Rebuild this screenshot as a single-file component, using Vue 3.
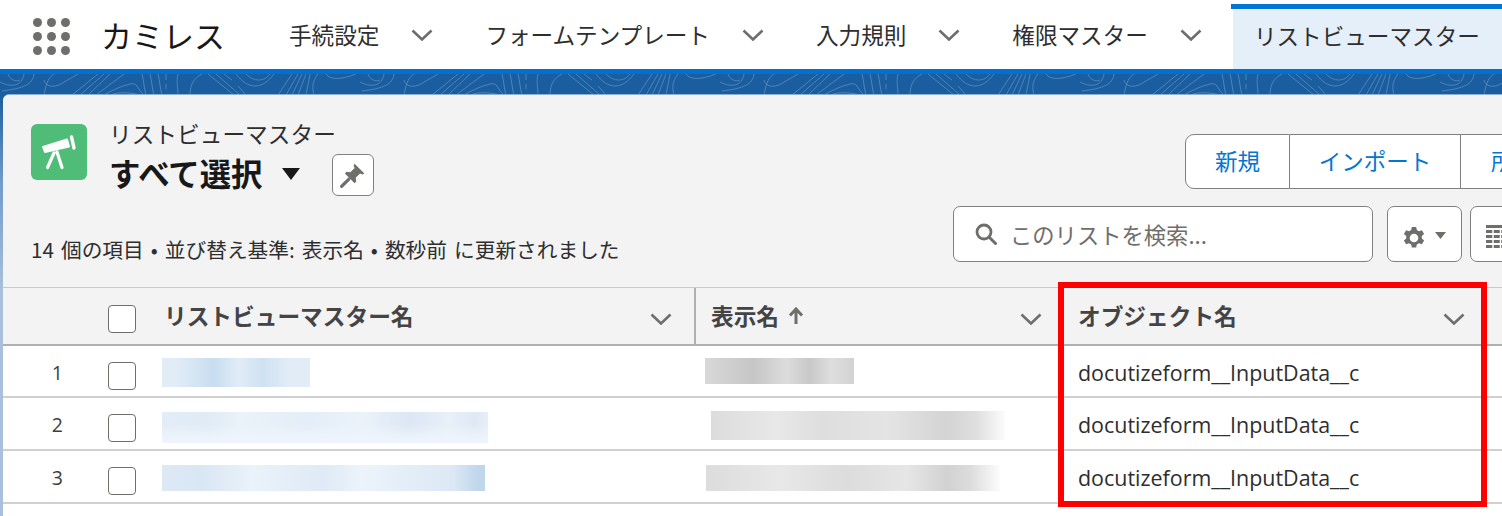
<script setup>
const tabs = [
  { label: '手続設定' },
  { label: 'フォームテンプレート' },
  { label: '入力規則' },
  { label: '権限マスター' },
]
const dots = [0, 1, 2, 3, 4, 5, 6, 7, 8]
const rows = [
  { n: 1, name: 'blur-name-1', disp: 'blur-disp-1' },
  { n: 2, name: 'blur-name-2', disp: 'blur-disp-2' },
  { n: 3, name: 'blur-name-3', disp: 'blur-disp-3' },
]
</script>

<template>
  <div class="page">
    <header class="nav">
      <div class="waffle"><i v-for="d in dots" :key="d"></i></div>
      <div class="app-name">カミレス</div>
      <nav class="tabs">
        <div v-for="t in tabs" :key="t.label" class="tab">
          <span>{{ t.label }}</span>
          <svg class="chev" viewBox="0 0 22 12"><path d="M1.5 1.5 11 10.5 20.5 1.5" /></svg>
        </div>
        <div class="tab-active">リストビューマスター</div>
      </nav>
    </header>

    <div class="band">
      <svg class="topo" width="1502" height="21" viewBox="0 0 1502 21">
        <defs>
          <pattern id="topo" x="0" y="0" width="360" height="21" patternUnits="userSpaceOnUse">
            <path d="M0 8C12 14 22 12 24 0M8 0C10 6 16 8 20 6M34 0C33 8 28 14 2 17M44 21C46 8 50 2 54 0M44 6C46 14 56 14 64 8L78 0M72 21 98 0M80 21 104 0M88 21 110 0M96 21 124 0M104 21C112 16 122 12 130 10S136 14 144 21M110 21C118 18 128 18 140 21M142 0C144 8 144 14 146 21M150 0C152 8 152 14 154 21M158 0C160 8 160 14 162 21M166 0V6M166 10V15M178 0C176 8 178 14 178 21M190 21C190 10 194 4 202 0M208 0 234 21M216 0 240 21M224 0 232 6M238 12 246 21M236 0C248 16 262 16 274 0M246 0C254 8 264 8 270 0M278 21 292 0M286 21 298 0M292 21 302 0M298 21 306 0M306 21 310 0M318 0C312 8 312 14 314 21M326 0C330 6 340 6 356 0" fill="none" stroke="#5b8fc0" stroke-width="1" opacity=".75" />
          </pattern>
        </defs>
        <rect width="1502" height="21" fill="url(#topo)" />
      </svg>
    </div>

    <main class="card">
      <section class="head">
        <div class="head-left">
          <div class="title-row">
            <div class="obj-icon">
              <svg viewBox="0 0 56 56" width="56" height="56">
                <path d="M12 23 36 15.500 38 22.500 14 28Z" fill="#fff" stroke="#fff" stroke-width="2" stroke-linejoin="round" />
                <path d="M40.500 13 43 24" stroke="#fff" stroke-width="3.400" stroke-linecap="round" fill="none" />
                <path d="M23 29 16.500 43.500M26 28 31 43.500" stroke="#fff" stroke-width="3.200" stroke-linecap="round" fill="none" />
              </svg>
            </div>
            <div class="titles">
              <div class="eyebrow">リストビューマスター</div>
              <div class="title-line">
                <span class="title">すべて選択</span>
                <svg class="title-caret" viewBox="0 0 18 12"><path d="M0 0H18L9 12Z" /></svg>
                <button class="pin">
                  <svg viewBox="0 0 24 24" width="26" height="26">
                    <path d="M13.500 1.500 22.500 10.500 20.500 11.500 18.500 10.500 14.500 14.500 15 18 13.500 19.500 4.500 10.500 6 9 9.500 9.500 13.500 5.500 12.500 3.500Z" fill="#706e6b" />
                    <path d="M8 16 1.500 22.500" stroke="#706e6b" stroke-width="3" stroke-linecap="round" />
                  </svg>
                </button>
              </div>
            </div>
          </div>
          <div class="meta">14 個の項目 • 並び替え基準: 表示名 • 数秒前 に更新されました</div>
        </div>
        <div class="head-right">
          <div class="btn-group">
            <button class="btn btn-new">新規</button>
            <button class="btn btn-import">インポート</button>
            <button class="btn btn-more">所有者の変更</button>
          </div>
          <div class="tools">
            <div class="search">
              <svg viewBox="0 0 22 22" width="22" height="22">
                <circle cx="9" cy="9" r="7" fill="none" stroke="#706e6b" stroke-width="2.800" />
                <path d="M14 14 20.500 20.500" stroke="#706e6b" stroke-width="3" stroke-linecap="round" />
              </svg>
              <span>このリストを検索...</span>
            </div>
            <button class="tool gear">
              <svg class="gear-ico" viewBox="0 0 22 22" width="22" height="22">
                <path fill="#706e6b" fill-rule="evenodd" d="M8.800 0h4.400l.6 3 2.200 1.300 2.900-1 2.200 3.800-2.300 2v2.400l2.300 2-2.200 3.800-2.900-1-2.200 1.300-.6 3H8.800l-.6-3L6 16.300l-2.900 1L.9 13.500l2.300-2V9.100l-2.300-2L3.100 3.300l2.900 1L8.200 3ZM11 6.700a3.800 3.800 0 1 0 0 8.600 3.800 3.800 0 0 0 0-8.600Z" />
              </svg>
              <svg class="mini-caret" viewBox="0 0 11 7" width="11" height="7"><path d="M0 0H11L5.500 7Z" fill="#706e6b" /></svg>
            </button>
            <button class="tool table-btn">
              <svg class="table-ico" viewBox="0 0 22 24" width="22" height="24">
                <path d="M0 0H22V3H0Z" fill="#706e6b" />
                <path d="M0 5H22V8H0ZM0 10H22V13H0ZM0 15H22V18H0ZM0 20H22V23H0Z" fill="#706e6b" />
                <path d="M7 5V23M14.500 5V23" stroke="#fff" stroke-width="1.500" />
              </svg>
            </button>
          </div>
        </div>
      </section>

      <section class="table">
        <div class="thead grid">
          <div></div>
          <div class="check-cell"><span class="check"></span></div>
          <div class="th th-name">
            <span>リストビューマスター名</span>
            <svg class="chev" viewBox="0 0 22 12"><path d="M1.500 1.500 11 10.500 20.500 1.500" /></svg>
          </div>
          <div class="th th-disp">
            <span>表示名</span>
            <svg class="arrow" viewBox="0 0 16 18" width="16" height="18"><path d="M8 17V3M2 8.500 8 2l6 6.500" /></svg>
            <svg class="chev push" viewBox="0 0 22 12"><path d="M1.500 1.500 11 10.500 20.500 1.500" /></svg>
          </div>
          <div class="th th-obj">
            <span>オブジェクト名</span>
            <svg class="chev" viewBox="0 0 22 12"><path d="M1.500 1.500 11 10.500 20.500 1.500" /></svg>
          </div>
        </div>
        <div v-for="r in rows" :key="r.n" class="row grid" :class="'row-' + r.n">
          <div class="num">{{ r.n }}</div>
          <div class="check-cell"><span class="check"></span></div>
          <div class="cell"><div class="blur" :class="r.name"></div></div>
          <div class="cell"><div class="blur" :class="r.disp"></div></div>
          <div class="cell obj">docutizeform__InputData__c</div>
        </div>
      </section>
      <div class="highlight"></div>
    </main>
  </div>
</template>

<style>
html, body { margin: 0; background: #fff; overflow: hidden; }
</style>

<style scoped>
.page {
  width: 1502px;
  height: 516px;
  overflow: hidden;
  font-family: "Noto Sans CJK JP", "Noto Sans", sans-serif;
  color: #2b2826;
  background: linear-gradient(180deg, #1b5e9f 0, #1b5e9f 95px, #6f9aca 180px, #a9c0dc 290px);
  display: flex;
  flex-direction: column;
}
.nav {
  height: 69px;
  flex: none;
  background: #fff;
  display: flex;
  align-items: stretch;
  padding-left: 33px;
}
.waffle {
  width: 37px;
  height: 37px;
  margin-top: 18px;
  display: grid;
  grid-template-columns: repeat(3, 9px);
  grid-auto-rows: 9px;
  gap: 5px;
}
.waffle i { background: #706e6b; border-radius: 50%; }
.app-name {
  margin-left: 31px;
  width: 188px;
  font-size: 31px;
  line-height: 69px;
  color: #181818;
  white-space: nowrap;
}
.tabs { display: flex; align-items: stretch; flex: 1; min-width: 0; }
.tab {
  display: flex;
  align-items: center;
  gap: 32px;
  margin-right: 52px;
  font-size: 22.600px;
  white-space: nowrap;
  color: #2e2e2e;
}
.tab:nth-of-type(4) { margin-right: 29px; }
.chev { width: 22px; height: 12px; flex: none; }
.chev path { fill: none; stroke: #706e6b; stroke-width: 2.600; }
.tab-active {
  flex: 1;
  margin-top: 4px;
  border-top: 5px solid #0176d3;
  background: linear-gradient(#e5eff9, #e5eff9) 2px 0 no-repeat;
  font-size: 22.600px;
  line-height: 54px;
  padding-left: 23px;
  white-space: nowrap;
  color: #2e2e2e;
}
.band {
  height: 26px;
  flex: none;
  border-top: 5px solid #0070d2;
  box-sizing: border-box;
  background: #1b5e9f;
  overflow: hidden;
}
.topo { display: block; }
.card {
  position: relative;
  flex: 1;
  margin-left: 3px;
  background: #fff;
  border-top-left-radius: 6px;
  box-shadow: 0 -1px 0 #8eb0d2;
  display: flex;
  flex-direction: column;
}
.head {
  height: 193px;
  flex: none;
  background: #f3f3f3;
  box-sizing: border-box;
  border-top-left-radius: 6px;
  border-bottom: 1px solid #c9c9c9;
  display: flex;
  justify-content: space-between;
  padding: 29px 0 0 28px;
}
.head-left { display: flex; flex-direction: column; }
.title-row { display: flex; gap: 22px; }
.obj-icon {
  width: 56px;
  height: 56px;
  border-radius: 6px;
  background: #4fbd78;
  flex: none;
}
.titles { margin-top: -4px; }
.eyebrow { font-size: 22.700px; line-height: 28px; color: #2e2e2e; }
.title-line { display: flex; align-items: flex-start; height: 44px; padding-top: 3px; }
.title { font-size: 31.400px; font-weight: 700; line-height: 44px; color: #181818; }
.title-caret { width: 18px; height: 12px; margin: 17px 0 0 19px; }
.title-caret path { fill: #181818; }
.pin {
  width: 42px;
  height: 42px;
  margin: 3px 0 0 32px;
  padding: 0;
  background: #fff;
  border: 1px solid #808080;
  border-radius: 6px;
  display: flex;
  align-items: center;
  justify-content: center;
  flex: none;
}
.meta {
  margin-top: 39px;
  font-size: 20.700px;
  word-spacing: 2.400px;
  line-height: 30px;
  color: #2e2e2e;
  white-space: nowrap;
}
.head-right { width: 549px; flex: none; overflow: hidden; display: flex; flex-direction: column; margin-top: 10px; }
.btn-group { display: flex; height: 55px; margin-left: 232px; flex: none; white-space: nowrap; }
.btn {
  height: 55px;
  flex: none;
  padding: 0 0 3px;
  background: #fff;
  border: 1px solid #808080;
  border-left: 0;
  font-family: inherit;
  font-size: 22.500px;
  color: #0176d3;
}
.btn-new { width: 105px; border-left: 1px solid #808080; border-radius: 9px 0 0 9px; }
.btn-import { width: 171px; }
.btn-more { width: 196px; }
.tools { display: flex; margin-top: 17px; height: 56px; white-space: nowrap; }
.search {
  width: 420px;
  box-sizing: border-box;
  background: #fff;
  border: 1px solid #808080;
  border-radius: 7px;
  display: flex;
  align-items: center;
  gap: 13px;
  padding-left: 21px;
  font-size: 22.300px;
  color: #706e6b;
  flex: none;
}
.tool {
  height: 56px;
  padding: 0;
  background: #fff;
  border: 1px solid #808080;
  border-radius: 7px;
  display: flex;
  align-items: center;
  flex: none;
}
.gear { width: 75px; margin-left: 14px; padding-left: 15px; gap: 10px; }
.gear-ico { margin-top: 8px; }
.mini-caret { flex: none; margin-top: 3px; }
.table-btn { width: 75px; margin-left: 8px; padding-left: 15px; }
.table-ico { margin-top: 6px; }
.table { flex: none; background: #fff; font-size: 21.500px; }
.grid { display: grid; grid-template-columns: 105px 54px 534px 362px 1fr; align-items: stretch; }
.thead { height: 58px; background: #f3f3f3; box-sizing: border-box; border-bottom: 2px solid #b0b0b0; }
.check-cell { display: flex; align-items: center; padding-top: 6px; }
.check {
  width: 28px;
  height: 28px;
  box-sizing: border-box;
  background: #fff;
  border: 1px solid #706e6b;
  border-radius: 4px;
}
.th {
  display: flex;
  align-items: center;
  font-size: 22.700px;
  font-weight: 700;
  color: #444;
  white-space: nowrap;
}
.th span { margin-bottom: 2px; }
.th .chev { margin-top: 6px; }
.th-name { padding-left: 2px; padding-right: 22px; justify-content: space-between; border-right: 2px solid #b0b0b0; box-sizing: border-box; }
.th-disp { padding-left: 15px; padding-right: 16px; }
.arrow { margin-left: 9px; fill: none; stroke: #706e6b; stroke-width: 3; }
.push { margin-left: auto; }
.th-obj { padding-left: 20px; padding-right: 37px; justify-content: space-between; }
.row { box-sizing: border-box; border-bottom: 2px solid #d0d0d0; height: 52px; }
.row-2, .row-3 { height: 53px; }
.num {
  text-align: right;
  padding-right: 45px;
  font-family: "Open Sans", "Noto Sans", sans-serif;
  font-size: 19.500px;
  color: #3e3e3c;
  line-height: 54px;
}
.cell { display: flex; align-items: flex-start; min-width: 0; }
.obj {
  padding-left: 20px;
  line-height: 54px;
  font-family: "Open Sans", "Noto Sans", sans-serif;
  font-size: 21.450px;
  color: #2e2e2e;
  white-space: nowrap;
}
.blur { flex: none; overflow: hidden; }
.blur-name-1 {
  width: 148px; height: 29px; margin-top: 12px;
  background:
    linear-gradient(90deg, rgba(198,220,239,0) 10%, #c8ddf0 35%, rgba(200,222,240,0) 52%, #cfe1f2 68%, rgba(207,225,242,0) 85%),
    #e1ecf7;
}
.blur-name-2 {
  width: 326px; height: 31px; margin-top: 14px;
  background:
    linear-gradient(180deg, rgba(233,241,249,0) 40%, #eef4fb 90%),
    linear-gradient(90deg, #e3edf7 0%, #e0ebf6 14%, #eaf2fa 24%, #e4eef8 45%, #ebf2fa 62%, #dbe7f4 76%, #e8f0f9 88%, #dfe9f5 96%, #e6eff8 100%);
}
.blur-name-3 {
  width: 323px; height: 26px; margin-top: 14px;
  background:
    linear-gradient(90deg, #dde9f5 0%, #d9e6f4 12%, #eaf2fa 28%, #dfeaf6 50%, #ecf3fb 62%, #e1ecf7 80%, #dce8f5 90%, #bfd6ec 98%);
}
.blur-disp-1 {
  width: 149px; height: 26px; margin: 12px 0 0 9px;
  background:
    linear-gradient(90deg, #d8d8d8 0%, #c6c6c6 33%, #dcdcdc 55%, #c8c8c8 70%, #dedede 85%, #d2d2d2 100%);
}
.blur-disp-2 {
  width: 294px; height: 29px; margin: 13px 0 0 15px;
  background:
    linear-gradient(90deg, #dcdcdc 0%, #e8e8e8 22%, #dedede 38%, #e4e4e4 60%, #d4d4d4 80%, #dedede 90%, #fcfcfc 100%);
}
.blur-disp-3 {
  width: 294px; height: 26px; margin: 14px 0 0 10px;
  background:
    linear-gradient(90deg, #dcdcdc 0%, #e8e8e8 25%, #dcdcdc 48%, #e6e6e6 68%, #d2d2d2 82%, #dcdcdc 90%, #fcfcfc 100%);
}
.highlight {
  position: absolute;
  left: 1055px;
  top: 187px;
  width: 429px;
  height: 225px;
  box-sizing: border-box;
  border: 6px solid #ff0000;
  pointer-events: none;
}
</style>
